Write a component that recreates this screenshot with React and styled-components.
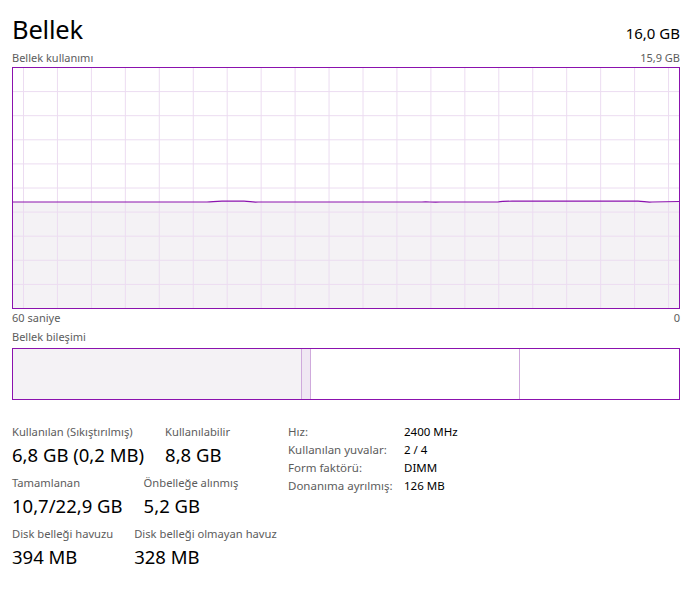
import React from "react";
import styled, { createGlobalStyle } from "styled-components";

const Global = createGlobalStyle`
  html, body { margin: 0; padding: 0; background: #ffffff; }
  body { font-family: "Noto Sans", "Open Sans", sans-serif; color: #000; }
`;

const PURPLE = "#8b12ae";
const GRID = "#ecdcf1";
const FILL = "#f4f2f5";

const Page = styled.div`
  width: 688px;
  height: 589px;
  box-sizing: border-box;
  padding: 12px 8px 0 12px;
  display: flex;
  flex-direction: column;
`;

const Header = styled.div`
  display: flex;
  justify-content: space-between;
  align-items: baseline;
  height: 40px;
`;

const Title = styled.h1`
  margin: 0;
  font-size: 25.5px;
  font-weight: 400;
  line-height: 34px;
  letter-spacing: -0.2px;
`;

const Total = styled.span`
  font-size: 15px;
  line-height: 20px;
`;

const Caption = styled.div`
  display: flex;
  justify-content: space-between;
  font-size: 11px;
  line-height: ${(p) => p.$lh || 17}px;
  color: #5c5c5c;
  height: ${(p) => p.$h || 15}px;
`;

const ChartSvg = styled.svg`
  display: block;
  width: 668px;
  height: 242px;
`;

const Composition = styled.div`
  display: flex;
  height: 50px;
  border: 1px solid ${PURPLE};
`;

const Segment = styled.div`
  width: ${(p) => (p.$w ? `${p.$w}px` : "auto")};
  flex: ${(p) => (p.$w ? "none" : "1")};
  background: ${(p) => p.$bg || "#fff"};
  border-right: ${(p) => (p.$last ? "none" : "1px solid #cfaadc")};
`;

const Stats = styled.div`
  display: flex;
  margin-top: 23px;
`;

const LeftStats = styled.div`
  width: 276px;
  display: flex;
  flex-direction: column;
`;

const StatRow = styled.div`
  display: flex;
  gap: 21px;
  height: 51px;
`;

const Stat = styled.div`
  display: flex;
  flex-direction: column;
`;

const StatLabel = styled.div`
  font-size: 11.2px;
  line-height: 18px;
  color: #5c5c5c;
  white-space: nowrap;
`;

const StatValue = styled.div`
  font-size: 18.5px;
  line-height: 28px;
  white-space: nowrap;
`;

const InfoTable = styled.div`
  display: grid;
  grid-template-columns: 116px auto;
  grid-auto-rows: 18px;
  font-size: 11.5px;
  line-height: 18px;
`;

const InfoLabel = styled.div`
  color: #5c5c5c;
  white-space: nowrap;
`;

const InfoValue = styled.div`
  white-space: nowrap;
`;

function Chart() {
  const W = 668;
  const H = 242;
  const verts = [];
  for (let k = 0; k < 20; k++) verts.push(11.5 + k * 33.95);
  const hors = [];
  for (let k = 1; k < 10; k++) hors.push(0.5 + k * 24.1);
  const lineY = 135;
  const line =
    `M1 ${lineY} L195 ${lineY} C200 ${lineY} 203 ${lineY - 0.8} 210 ${lineY - 0.8} ` +
    `L232 ${lineY - 0.8} C238 ${lineY - 0.8} 240 ${lineY + 0.6} 246 ${lineY} ` +
    `L410 ${lineY} C416 ${lineY - 0.6} 420 ${lineY + 0.6} 428 ${lineY} ` +
    `L486 ${lineY} C490 ${lineY - 0.8} 494 ${lineY - 0.8} 500 ${lineY - 0.8} ` +
    `L626 ${lineY - 0.8} C632 ${lineY - 0.8} 634 ${lineY + 0.6} 640 ${lineY} L${W - 1} ${lineY - 0.5}`;
  return (
    <ChartSvg viewBox={`0 0 ${W} ${H}`}>
      <rect x="0" y="0" width={W} height={H} fill="#fff" />
      <path d={`${line} L${W - 1} ${H - 1} L1 ${H - 1} Z`} fill={FILL} />
      {verts.map((x) => (
        <line key={`v${x}`} x1={x} y1="1" x2={x} y2={H - 1} stroke={GRID} strokeWidth="1" />
      ))}
      {hors.map((y) => (
        <line key={`h${y}`} x1="1" y1={y} x2={W - 1} y2={y} stroke={GRID} strokeWidth="1" />
      ))}
      <path d={line} fill="none" stroke={PURPLE} strokeWidth="1.2" />
      <rect x="0.5" y="0.5" width={W - 1} height={H - 1} fill="none" stroke={PURPLE} strokeWidth="1" />
    </ChartSvg>
  );
}

export default function App() {
  return (
    <>
      <Global />
      <Page>
        <Header>
          <Title>Bellek</Title>
          <Total>16,0 GB</Total>
        </Header>
        <Caption $h={15} $lh={11}>
          <span>Bellek kullanımı</span>
          <span>15,9 GB</span>
        </Caption>
        <Chart />
        <Caption $h={19}>
          <span>60 saniye</span>
          <span>0</span>
        </Caption>
        <Caption $h={20}>
          <span>Bellek bileşimi</span>
        </Caption>
        <Composition>
          <Segment $w={288} $bg={FILL} />
          <Segment $w={8} $bg="#f0e8f3" />
          <Segment $w={208} />
          <Segment $last />
        </Composition>
        <Stats>
          <LeftStats>
            <StatRow>
              <Stat>
                <StatLabel>Kullanılan (Sıkıştırılmış)</StatLabel>
                <StatValue>6,8 GB (0,2 MB)</StatValue>
              </Stat>
              <Stat>
                <StatLabel>Kullanılabilir</StatLabel>
                <StatValue>8,8 GB</StatValue>
              </Stat>
            </StatRow>
            <StatRow>
              <Stat>
                <StatLabel>Tamamlanan</StatLabel>
                <StatValue>10,7/22,9 GB</StatValue>
              </Stat>
              <Stat>
                <StatLabel>Önbelleğe alınmış</StatLabel>
                <StatValue>5,2 GB</StatValue>
              </Stat>
            </StatRow>
            <StatRow>
              <Stat>
                <StatLabel>Disk belleği havuzu</StatLabel>
                <StatValue>394 MB</StatValue>
              </Stat>
              <Stat>
                <StatLabel>Disk belleği olmayan havuz</StatLabel>
                <StatValue>328 MB</StatValue>
              </Stat>
            </StatRow>
          </LeftStats>
          <InfoTable>
            <InfoLabel>Hız:</InfoLabel>
            <InfoValue>2400 MHz</InfoValue>
            <InfoLabel>Kullanılan yuvalar:</InfoLabel>
            <InfoValue>2 / 4</InfoValue>
            <InfoLabel>Form faktörü:</InfoLabel>
            <InfoValue>DIMM</InfoValue>
            <InfoLabel>Donanıma ayrılmış:</InfoLabel>
            <InfoValue>126 MB</InfoValue>
          </InfoTable>
        </Stats>
      </Page>
    </>
  );
}
